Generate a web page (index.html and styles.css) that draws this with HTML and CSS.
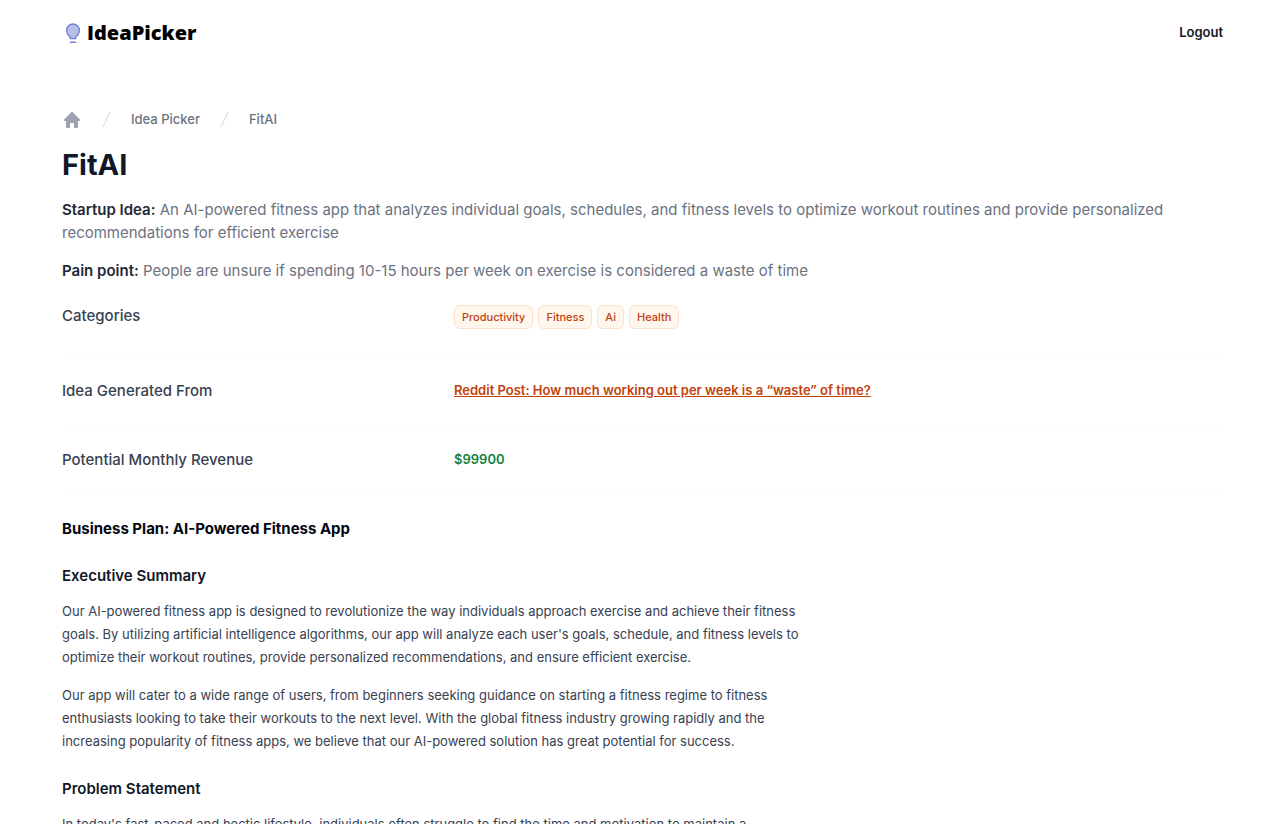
FILE: index.html
```html
<!DOCTYPE html>
<html lang="en">
<head>
<meta charset="utf-8">
<meta name="viewport" content="width=device-width, initial-scale=1">
<title>FitAI - IdeaPicker</title>
<link rel="stylesheet" href="styles.css">
</head>
<body>
<header class="topbar">
  <a class="brand" href="#">
    <svg class="brand-icon" viewBox="0 0 16 22" aria-hidden="true">
      <path d="M5.300 16.600v-1.500C2.800 13.200 1.700 10.900 1.700 8.300a6.300 6.300 0 0 1 12.600 0c0 2.600-1.100 4.900-3.600 6.800v1.500z" fill="#b9c0e3" stroke="#7480dc" stroke-width="1.400" stroke-linejoin="round"/>
      <path d="M5.300 20.300h5.400" stroke="#7480dc" stroke-width="1.400" stroke-linecap="round"/>
    </svg>
    <span>IdeaPicker</span>
  </a>
  <a class="logout" href="#">Logout</a>
</header>
<main class="page">
  <nav aria-label="Breadcrumb">
    <ol class="crumbs">
      <li><a href="#" aria-label="Home"><svg class="home" viewBox="0 0 20 20" aria-hidden="true"><path fill="currentColor" fill-rule="evenodd" d="M9.293 2.293a1 1 0 011.414 0l7 7A1 1 0 0117 11h-1v6a1 1 0 01-1 1h-2a1 1 0 01-1-1v-3a1 1 0 00-1-1H9a1 1 0 00-1 1v3a1 1 0 01-1 1H5a1 1 0 01-1-1v-6H3a1 1 0 01-.707-1.707l7-7z" clip-rule="evenodd"/></svg></a></li>
      <li><svg class="slash" viewBox="0 0 20 20" aria-hidden="true"><path fill="currentColor" d="M5.555 17.776l8-16 .894.448-8 16-.894-.448z"/></svg><a href="#">Idea Picker</a></li>
      <li><svg class="slash" viewBox="0 0 20 20" aria-hidden="true"><path fill="currentColor" d="M5.555 17.776l8-16 .894.448-8 16-.894-.448z"/></svg><a href="#" aria-current="page">FitAI</a></li>
    </ol>
  </nav>
  <h1 class="title">FitAI</h1>
  <p class="lead"><strong>Startup Idea:</strong> An AI-powered fitness app that analyzes individual goals, schedules, and fitness levels to optimize workout routines and provide personalized recommendations for efficient exercise</p>
  <p class="lead"><strong>Pain point:</strong> People are unsure if spending 10-15 hours per week on exercise is considered a waste of time</p>
  <dl class="facts">
    <div class="fact"><dt>Categories</dt><dd class="tags"><span class="tag">Productivity</span><span class="tag">Fitness</span><span class="tag">Ai</span><span class="tag">Health</span></dd></div>
    <div class="fact"><dt>Idea Generated From</dt><dd><a class="source" href="#">Reddit Post: How much working out per week is a “waste” of time?</a></dd></div>
    <div class="fact"><dt>Potential Monthly Revenue</dt><dd class="revenue">$99900</dd></div>
  </dl>
  <article class="plan">
    <h2>Business Plan: AI-Powered Fitness App</h2>
    <h3>Executive Summary</h3>
    <p>Our AI-powered fitness app is designed to revolutionize the way individuals approach exercise and achieve their fitness goals. By utilizing artificial intelligence algorithms, our app will analyze each user's goals, schedule, and fitness levels to optimize their workout routines, provide personalized recommendations, and ensure efficient exercise.</p>
    <p>Our app will cater to a wide range of users, from beginners seeking guidance on starting a fitness regime to fitness enthusiasts looking to take their workouts to the next level. With the global fitness industry growing rapidly and the increasing popularity of fitness apps, we believe that our AI-powered solution has great potential for success.</p>
    <h3>Problem Statement</h3>
    <p>In today's fast-paced and hectic lifestyle, individuals often struggle to find the time and motivation to maintain a</p>
  </article>
</main>
</body>
</html>
```
FILE: styles.css
```css
* { box-sizing: border-box; }
html { scrollbar-width: none; }
body { margin: 0; background: #fff; color: #111827; font-family: Inter, "Liberation Sans", sans-serif; font-size: 13px; line-height: 23px; }
h1, h2, h3, p, dl, dd, ol { margin: 0; padding: 0; }
a { color: inherit; text-decoration: none; }

.topbar { display: flex; justify-content: space-between; align-items: center; padding: 21px 57px 20px 65px; }
.brand { display: flex; align-items: center; gap: 6px; color: #000; font-family: "Open Sans", Lato, sans-serif; font-size: 20px; font-weight: 800; }
.brand-icon { width: 16px; height: 22px; }
.logout { font-weight: 600; }

.page { padding: 44px 56px 0 62px; }
.crumbs { display: flex; align-items: center; gap: 15px; list-style: none; color: #6b7280; font-weight: 500; }
.crumbs li { display: flex; align-items: center; gap: 15px; }
.crumbs a { display: flex; }
.home { width: 20px; height: 20px; color: #9ca3af; }
.slash { width: 19px; height: 19px; color: #d1d5db; }

.title { margin: 16px 0 15px; font-size: 29px; line-height: 36px; font-weight: 700; color: #0f172a; }
.lead { margin-bottom: 15px; font-size: 15px; color: #6b7280; }
.lead strong { font-weight: 600; color: #1f2937; }

.fact { display: grid; grid-template-columns: 1fr 2fr; gap: 7px; padding: 23px 0 22px; border-bottom: 1px solid #f9fafb; }
.fact:first-child { padding-top: 7px; }
.fact dt { font-size: 15px; font-weight: 500; color: #374151; }
.tags { display: flex; gap: 5px; padding: 1px 0 4px; }
.tag { padding: 3px 7px; border: 1px solid #fde0ca; border-radius: 6px; background: #fff7ed; color: #c2410c; font-size: 11px; line-height: 16px; font-weight: 500; }
.source { color: #c2410c; font-weight: 600; text-decoration: underline; }
.revenue { color: #15803d; font-weight: 600; }

.plan { max-width: 752px; padding-top: 23px; color: #374151; }
.plan h2, .plan h3 { font-size: 15px; line-height: 23px; color: #111827; }
.plan h2 { margin-bottom: 24px; font-weight: 700; color: #030712; }
.plan h3 { margin: 24px 0 13px; font-weight: 600; }
.plan p { margin-bottom: 15px; }
```
